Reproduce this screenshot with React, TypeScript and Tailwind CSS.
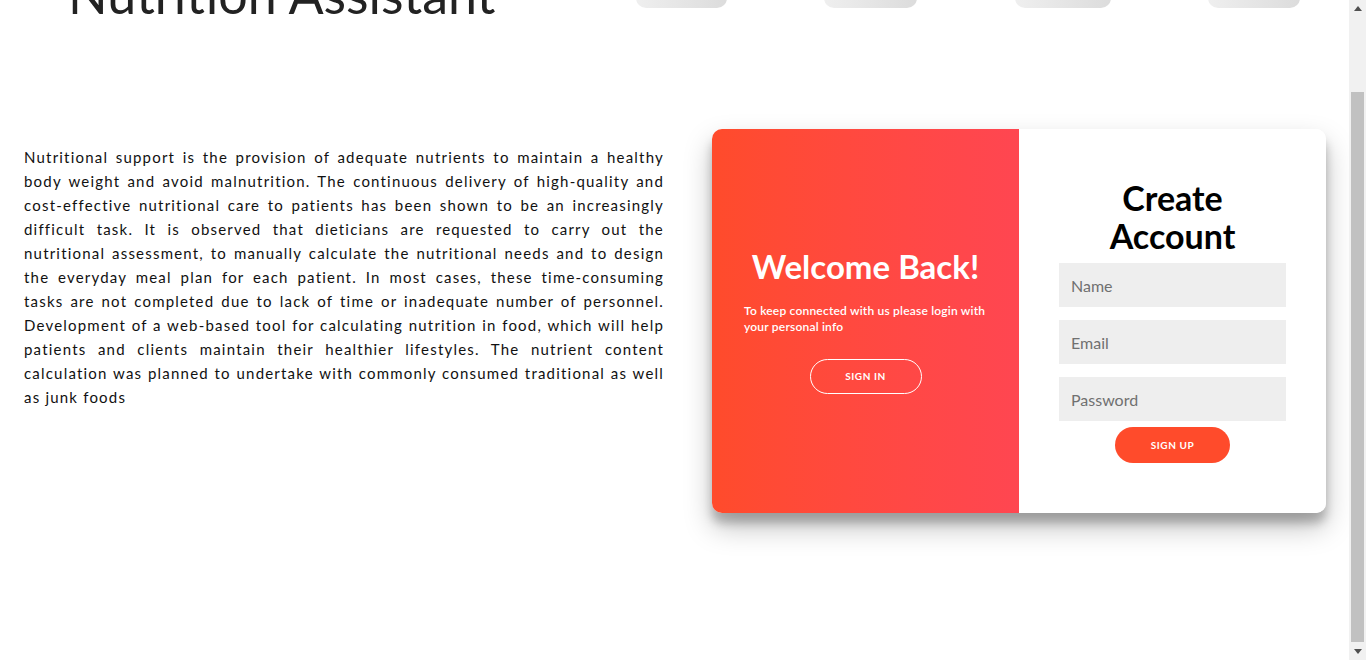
import React from "react";

const font = { fontFamily: "Lato, 'Open Sans', sans-serif" };

const NavPill = ({ w }: { w: string }) => (
  <button
    type="button"
    className={`h-[42px] ${w} rounded-b-[10px] bg-gradient-to-r from-[#efefef] to-[#dcdcdc]`}
  />
);

const Scrollbar = () => (
  <aside className="flex h-full w-[17px] shrink-0 flex-col bg-[#f1f1f1]">
    <div className="flex h-[17px] items-center justify-center">
      <svg width="8" height="5" viewBox="0 0 8 5">
        <path d="M0 5 L4 0 L8 5 Z" fill="#505050" />
      </svg>
    </div>
    <div className="mx-[2px] mt-[75px] h-[550px] bg-[#c1c1c1]" />
    <div className="flex-1" />
    <div className="flex h-[17px] items-center justify-center">
      <svg width="8" height="5" viewBox="0 0 8 5">
        <path d="M0 0 L8 0 L4 5 Z" fill="#505050" />
      </svg>
    </div>
  </aside>
);

const inputCls =
  "h-[44px] w-full bg-[#eee] px-[12px] text-[16px] text-[#333] outline-none placeholder:text-[#707070]";

export default function App() {
  return (
    <div className="flex h-[660px] w-full overflow-hidden bg-white" style={font}>
      <main className="min-w-0 flex-1">
        <header className="-mt-[34px] flex items-start">
          <h1 className="ml-[68px] text-[52px] leading-[56px] font-normal text-[#222]">
            Nutrition Assistant
          </h1>
          <nav className="ml-auto mr-[49px] flex">
            <NavPill w="w-[91px]" />
            <div className="w-[97px]" />
            <NavPill w="w-[93px]" />
            <div className="w-[98px]" />
            <NavPill w="w-[96px]" />
            <div className="w-[97px]" />
            <NavPill w="w-[92px]" />
          </nav>
        </header>

        <section className="flex items-start pl-[24px] pt-[107px]">
          <p className="mt-[16px] w-[640px] shrink-0 text-justify text-[15px] leading-[24px] tracking-[1.2px] text-[#111]">
            Nutritional support is the provision of adequate nutrients to maintain a healthy body weight and avoid
            malnutrition. The continuous delivery of high-quality and cost-effective nutritional care to patients has
            been shown to be an increasingly difficult task. It is observed that dieticians are requested to carry out
            the nutritional assessment, to manually calculate the nutritional needs and to design the everyday meal plan
            for each patient. In most cases, these time-consuming tasks are not completed due to lack of time or
            inadequate number of personnel. Development of a web-based tool for calculating nutrition in food, which
            will help patients and clients maintain their healthier lifestyles. The nutrient content calculation was
            planned to undertake with commonly consumed traditional as well as junk foods
          </p>

          <div className="ml-[48px] flex h-[384px] w-[614px] shrink-0 overflow-hidden rounded-[10px] shadow-[0_14px_28px_rgba(0,0,0,0.25),0_10px_10px_rgba(0,0,0,0.22)]">
            <div className="flex w-1/2 flex-col items-center justify-center bg-gradient-to-r from-[#ff4b2b] to-[#ff4651] px-[32px] pb-[2px] text-white">
              <h2 className="text-[33px] leading-[38px] font-bold">Welcome Back!</h2>
              <p className="mt-[18px] self-start text-[12px] leading-[16px] font-semibold tracking-[0.2px]">
                To keep connected with us please login with your personal info
              </p>
              <button
                type="button"
                className="mt-[24px] h-[35px] w-[112px] rounded-full border border-white text-[10px] font-bold tracking-[0.6px] text-white"
              >
                SIGN IN
              </button>
            </div>

            <div className="flex w-1/2 flex-col items-center justify-center bg-white px-[40px]">
              <h2 className="max-w-[200px] text-center text-[34px] leading-[38px] font-bold text-black">
                Create Account
              </h2>
              <form className="mt-[8px] flex w-full flex-col gap-[13px]">
                <input placeholder="Name" className={inputCls} />
                <input placeholder="Email" className={inputCls} />
                <input placeholder="Password" type="password" className={inputCls} />
              </form>
              <button
                type="button"
                className="mt-[6px] h-[36px] w-[115px] rounded-full bg-[#ff4b2b] text-[10px] font-bold tracking-[0.6px] text-white"
              >
                SIGN UP
              </button>
            </div>
          </div>
        </section>
      </main>
      <Scrollbar />
    </div>
  );
}
